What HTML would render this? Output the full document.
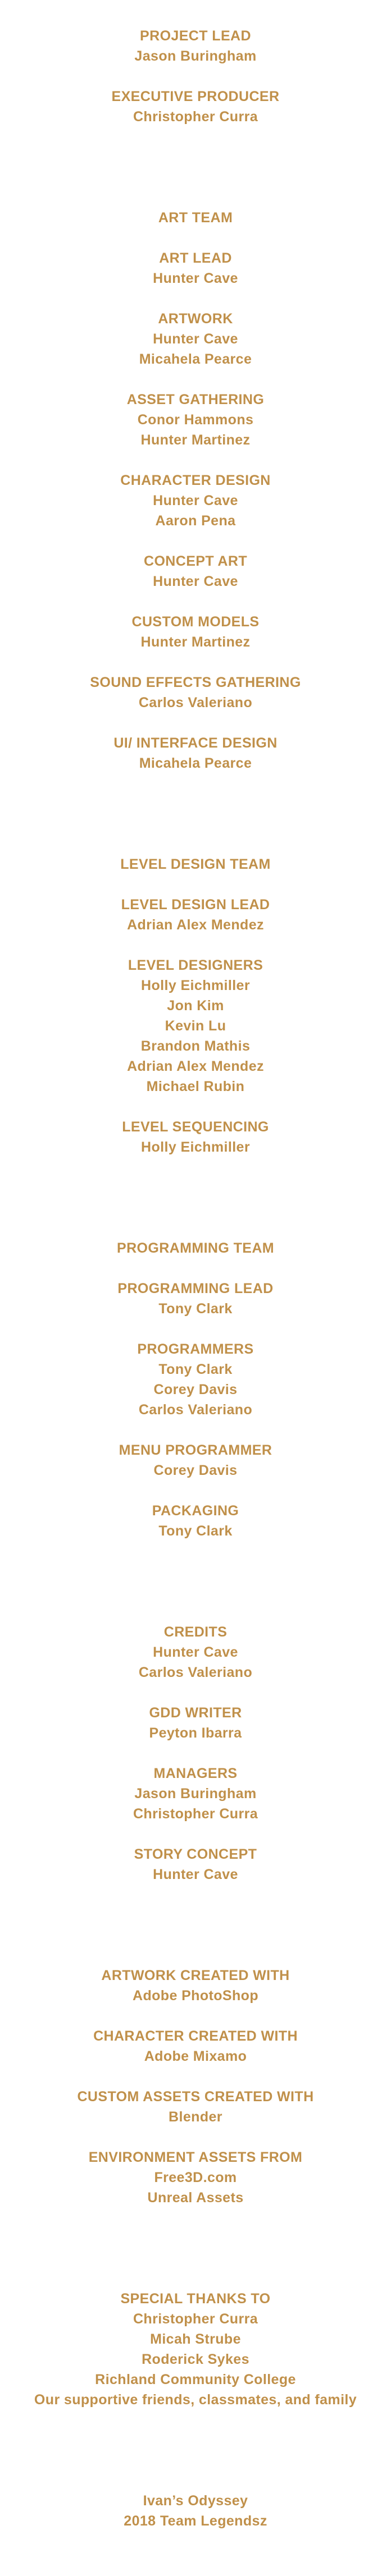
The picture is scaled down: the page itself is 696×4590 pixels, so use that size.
<!DOCTYPE html>
<html><head><meta charset="utf-8"><style>
html,body{margin:0;padding:0;background:#fff}
body{width:696px;height:4590px;overflow:hidden}
.c{padding-top:46px;text-align:center;font-family:"Liberation Sans",sans-serif;font-weight:bold;font-size:25px;line-height:36px;color:#c0904a;letter-spacing:0.4px}
.c div{height:36px;white-space:nowrap}
</style></head><body><div class="c">
<div>PROJECT LEAD</div><div>Jason Buringham</div><div></div>
<div>EXECUTIVE PRODUCER</div><div>Christopher Curra</div>
<div></div><div></div><div></div><div></div>
<div>ART TEAM</div><div></div>
<div>ART LEAD</div><div>Hunter Cave</div><div></div>
<div>ARTWORK</div><div>Hunter Cave</div><div>Micahela Pearce</div><div></div>
<div>ASSET GATHERING</div><div>Conor Hammons</div><div>Hunter Martinez</div><div></div>
<div>CHARACTER DESIGN</div><div>Hunter Cave</div><div>Aaron Pena</div><div></div>
<div>CONCEPT ART</div><div>Hunter Cave</div><div></div>
<div>CUSTOM MODELS</div><div>Hunter Martinez</div><div></div>
<div>SOUND EFFECTS GATHERING</div><div>Carlos Valeriano</div><div></div>
<div>UI/ INTERFACE DESIGN</div><div>Micahela Pearce</div>
<div></div><div></div><div></div><div></div>
<div>LEVEL DESIGN TEAM</div><div></div>
<div>LEVEL DESIGN LEAD</div><div>Adrian Alex Mendez</div><div></div>
<div>LEVEL DESIGNERS</div><div>Holly Eichmiller</div><div>Jon Kim</div><div>Kevin Lu</div><div>Brandon Mathis</div><div>Adrian Alex Mendez</div><div>Michael Rubin</div><div></div>
<div>LEVEL SEQUENCING</div><div>Holly Eichmiller</div>
<div></div><div></div><div></div><div></div>
<div>PROGRAMMING TEAM</div><div></div>
<div>PROGRAMMING LEAD</div><div>Tony Clark</div><div></div>
<div>PROGRAMMERS</div><div>Tony Clark</div><div>Corey Davis</div><div>Carlos Valeriano</div><div></div>
<div>MENU PROGRAMMER</div><div>Corey Davis</div><div></div>
<div>PACKAGING</div><div>Tony Clark</div>
<div></div><div></div><div></div><div></div>
<div>CREDITS</div><div>Hunter Cave</div><div>Carlos Valeriano</div><div></div>
<div>GDD WRITER</div><div>Peyton Ibarra</div><div></div>
<div>MANAGERS</div><div>Jason Buringham</div><div>Christopher Curra</div><div></div>
<div>STORY CONCEPT</div><div>Hunter Cave</div>
<div></div><div></div><div></div><div></div>
<div>ARTWORK CREATED WITH</div><div>Adobe PhotoShop</div><div></div>
<div>CHARACTER CREATED WITH</div><div>Adobe Mixamo</div><div></div>
<div>CUSTOM ASSETS CREATED WITH</div><div>Blender</div><div></div>
<div>ENVIRONMENT ASSETS FROM</div><div>Free3D.com</div><div>Unreal Assets</div>
<div></div><div></div><div></div><div></div>
<div>SPECIAL THANKS TO</div><div>Christopher Curra</div><div>Micah Strube</div><div>Roderick Sykes</div><div>Richland Community College</div><div>Our supportive friends, classmates, and family</div>
<div></div><div></div><div></div><div></div>
<div>Ivan’s Odyssey</div><div>2018 Team Legendsz</div>
</div></body></html>
